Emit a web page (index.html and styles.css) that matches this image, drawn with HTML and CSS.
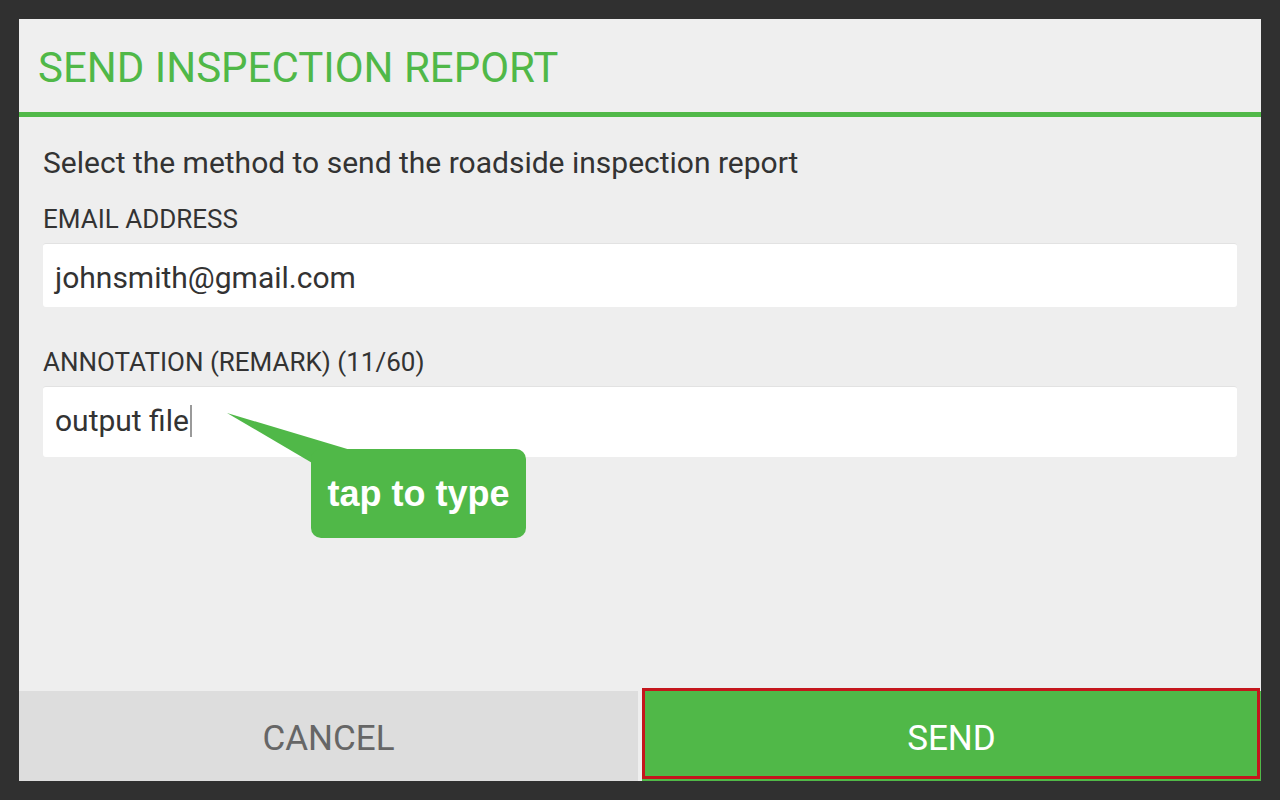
FILE: index.html
```html
<!DOCTYPE html>
<html lang="en">
<head>
    <meta charset="UTF-8">
    <meta name="viewport" content="width=device-width, initial-scale=1.0">
    <title>Send Inspection Report</title>
    <link rel="stylesheet" href="styles.css">
</head>
<body>
    <div class="dialog">
        <div class="dialog-header">
            <h1>SEND INSPECTION REPORT</h1>
        </div>
        <div class="dialog-body">
            <p class="intro">Select the method to send the roadside inspection report</p>
            <label class="field-label">EMAIL ADDRESS</label>
            <div class="field">johnsmith@gmail.com</div>
            <label class="field-label second">ANNOTATION (REMARK) (11/60)</label>
            <div class="field tall">output file<span class="caret"></span></div>
        </div>
        <div class="dialog-footer">
            <button type="button" class="btn cancel">CANCEL</button>
            <button type="button" class="btn send">SEND</button>
        </div>

        <svg class="hint-tail" width="160" height="70" viewBox="0 0 160 70">
            <polygon points="8,4 135,42 100,58" fill="#50b848"/>
        </svg>
        <div class="hint">tap to type</div>
    </div>
</body>
</html>
```

FILE: styles.css
```css
body {
    margin: 0;
    background-color: #303030;
    font-family: Roboto, "Liberation Sans", sans-serif;
}
.dialog {
    position: relative;
    margin: 19px 19px 0 19px;
    width: 1242px;
    height: 762px;
    background-color: #eeeeee;
    display: flex;
    flex-direction: column;
}
.dialog-header {
    height: 65px;
    padding: 28px 0 0 19px;
    background-color: #efefef;
    border-bottom: 5px solid #50b848;
}
.dialog-header h1 {
    margin: 0;
    font-size: 42px;
    line-height: 42px;
    font-weight: 400;
    color: #50b848;
}
.dialog-body {
    flex: 1;
    padding: 28px 24px 0 24px;
}
.intro {
    margin: 0;
    font-size: 30px;
    line-height: 36px;
    color: #333;
}
.field-label {
    display: block;
    margin-top: 23px;
    font-size: 26px;
    line-height: 30px;
    color: #333;
}
.field-label.second {
    margin-top: 40px;
}
.field {
    margin-top: 9px;
    padding: 4px 12px 0 12px;
    height: 64px;
    box-sizing: border-box;
    line-height: 60px;
    font-size: 30px;
    color: #333;
    background-color: #fff;
    border-top: 1px solid #e2e2e2;
    border-radius: 3px;
}
.field.tall {
    height: 71px;
}
.caret {
    display: inline-block;
    width: 2px;
    height: 32px;
    margin-left: 1px;
    background-color: #9a9a9a;
    vertical-align: -6px;
}
.dialog-footer {
    display: flex;
    gap: 4px;
    height: 90px;
}
.btn {
    position: relative;
    flex: 1;
    border: none;
    padding: 4px 0 0 0;
    font-family: Roboto, "Liberation Sans", sans-serif;
    font-size: 35px;
    line-height: 35px;
    cursor: pointer;
}
.cancel {
    background-color: #dddddd;
    color: #666;
}
.send {
    background-color: #50b848;
    color: #fff;
}
.send::after {
    content: "";
    position: absolute;
    top: -3px;
    left: 0;
    right: 1px;
    bottom: 2px;
    border: 3px solid #c4161c;
}
.hint-tail {
    position: absolute;
    left: 200px;
    top: 390px;
}
.hint {
    position: absolute;
    left: 292px;
    top: 430px;
    width: 215px;
    height: 89px;
    display: flex;
    align-items: center;
    justify-content: center;
    background-color: #50b848;
    border-radius: 10px;
    color: #fff;
    font-family: "Liberation Sans", Arial, sans-serif;
    font-weight: 700;
    font-size: 36px;
    line-height: 36px;
}
```
